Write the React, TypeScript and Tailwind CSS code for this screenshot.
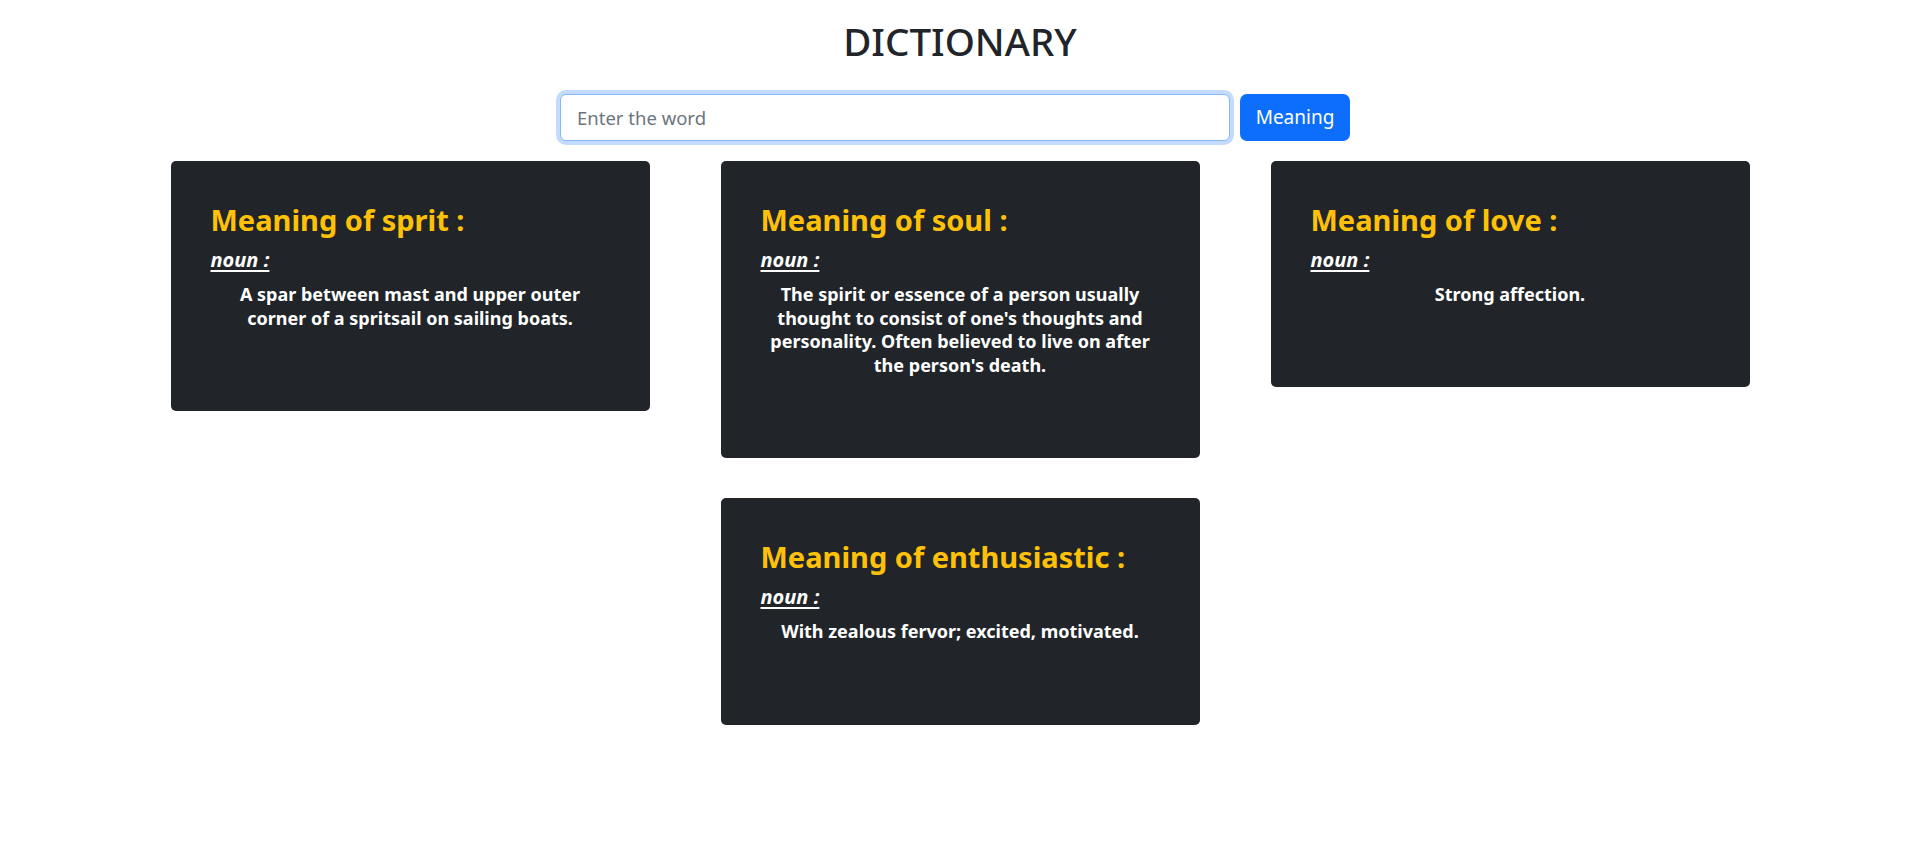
import React from "react";

const cards = [
  { word: "sprit", def: "A spar between mast and upper outer corner of a spritsail on sailing boats." },
  { word: "soul", def: "The spirit or essence of a person usually thought to consist of one's thoughts and personality. Often believed to live on after the person's death." },
  { word: "love", def: "Strong affection." },
  { word: "enthusiastic", def: "With zealous fervor; excited, motivated." },
];

export default function App() {
  return (
    <div className="min-h-[857px] bg-white font-['Noto_Sans',sans-serif] text-[#212529]">
      <h1 className="pt-[18px] text-center text-[38.5px] font-medium leading-[46px] text-[#212529]">DICTIONARY</h1>
      <div className="mt-[30px] flex justify-center pr-[10px]">
        <input
          placeholder="Enter the word"
          className="h-[47px] w-[670px] rounded-[6px] border border-[#86b7fe] bg-white px-4 text-[18.5px] text-[#212529] shadow-[0_0_0_4px_#c2dbfe] outline-none placeholder:text-[#6c757d]"
        />
        <button className="ml-[10px] h-[47px] w-[110px] rounded-[7px] bg-[#0d6efd] text-[19px] text-white">Meaning</button>
      </div>
      <div className="mx-auto mt-[20px] flex w-[1650px] flex-wrap items-start justify-center gap-y-[40px]">
        {cards.map((c) => (
          <div key={c.word} className="flex w-[550px] justify-center">
            <div className="w-[479px] rounded-[5px] bg-[#212529] px-[40px] pt-[40px] pb-[80.5px]">
              <h2 className="mb-[9px] text-[29px] font-bold leading-[38px] text-[#ffc107]">Meaning of {c.word} :</h2>
              <p className="mb-[11px] text-[20px] font-bold italic leading-[24px] text-white underline decoration-2 underline-offset-[3px]">noun :</p>
              <h5 className="text-center text-[18px] font-bold leading-[23.7px] text-white">{c.def}</h5>
            </div>
          </div>
        ))}
      </div>
    </div>
  );
}
